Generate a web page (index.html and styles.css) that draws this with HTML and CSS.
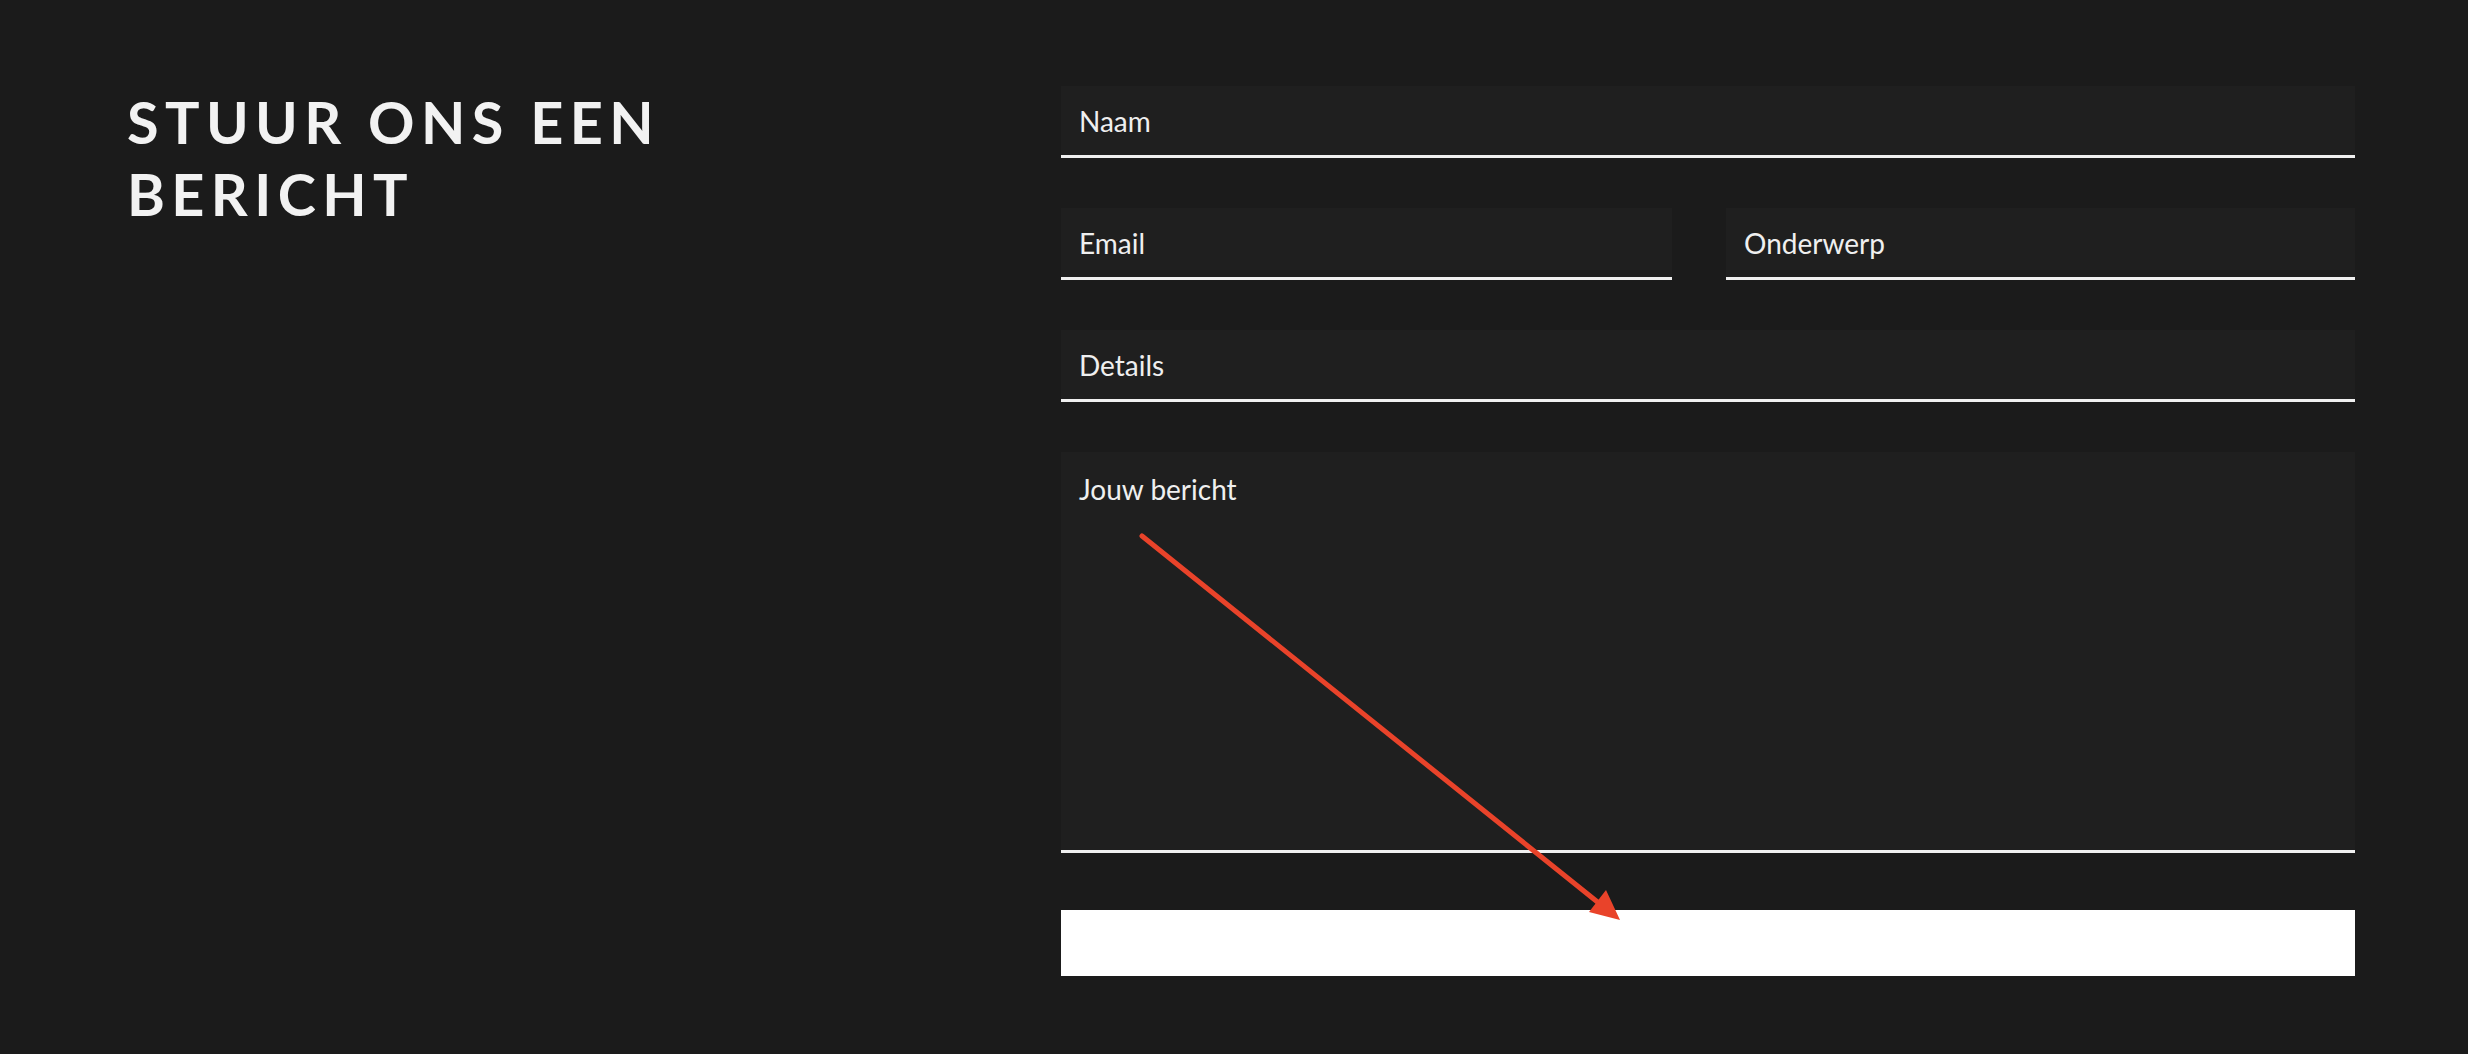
FILE: index.html
```html
<!DOCTYPE html>
<html lang="nl">
<head>
<meta charset="utf-8">
<title>Stuur ons een bericht</title>
<link rel="stylesheet" href="styles.css">
</head>
<body>
<main class="contact">
  <div class="intro">
    <h1 class="title">STUUR ONS EEN BERICHT</h1>
  </div>
  <form class="form">
    <input class="field" type="text" placeholder="Naam">
    <div class="row">
      <input class="field" type="email" placeholder="Email">
      <input class="field" type="text" placeholder="Onderwerp">
    </div>
    <input class="field" type="text" placeholder="Details">
    <textarea class="field area" placeholder="Jouw bericht"></textarea>
    <button class="submit" type="button"></button>
  </form>
</main>
<svg class="annotation" width="2468" height="1054" viewBox="0 0 2468 1054">
  <line x1="1142" y1="536" x2="1600" y2="904" stroke="#e9432a" stroke-width="5" stroke-linecap="round"/>
  <polygon points="1620,920 1589,912 1606,890" fill="#e9432a"/>
</svg>
</body>
</html>
```
FILE: styles.css
```css
html, body {
  margin: 0;
  padding: 0;
}
body {
  background: #1b1b1b;
  color: #f2f2f2;
  font-family: Lato, "Open Sans", sans-serif;
  width: 2468px;
  height: 1054px;
  overflow: hidden;
  position: relative;
}
.contact {
  display: grid;
  grid-template-columns: 934px 1294px;
  padding: 86px 0 0 127px;
}
.title {
  margin: 0;
  max-width: 620px;
  font-family: Lato, sans-serif;
  font-weight: 700;
  font-size: 57.6px;
  line-height: 72px;
  letter-spacing: 6.4px;
  color: #f2f2f2;
}
.form {
  display: flex;
  flex-direction: column;
  gap: 50px;
}
.row {
  display: grid;
  grid-template-columns: 611px 629px;
  column-gap: 54px;
}
.field {
  display: block;
  box-sizing: border-box;
  width: 100%;
  height: 72px;
  margin: 0;
  padding: 0 18px;
  border: none;
  border-bottom: 3px solid #f0f0f0;
  border-radius: 0;
  background: #1f1f1f;
  color: #f0f0f0;
  font-family: Lato, sans-serif;
  font-size: 28px;
  outline: none;
}
.field::placeholder {
  color: #efefef;
  opacity: 1;
}
.area {
  height: 401px;
  padding-top: 20px;
  resize: none;
  line-height: 34px;
}
.submit {
  display: block;
  height: 66px;
  margin-top: 7px;
  border: none;
  background: #ffffff;
  padding: 0;
}
.annotation {
  position: absolute;
  left: 0;
  top: 0;
  pointer-events: none;
}
```
